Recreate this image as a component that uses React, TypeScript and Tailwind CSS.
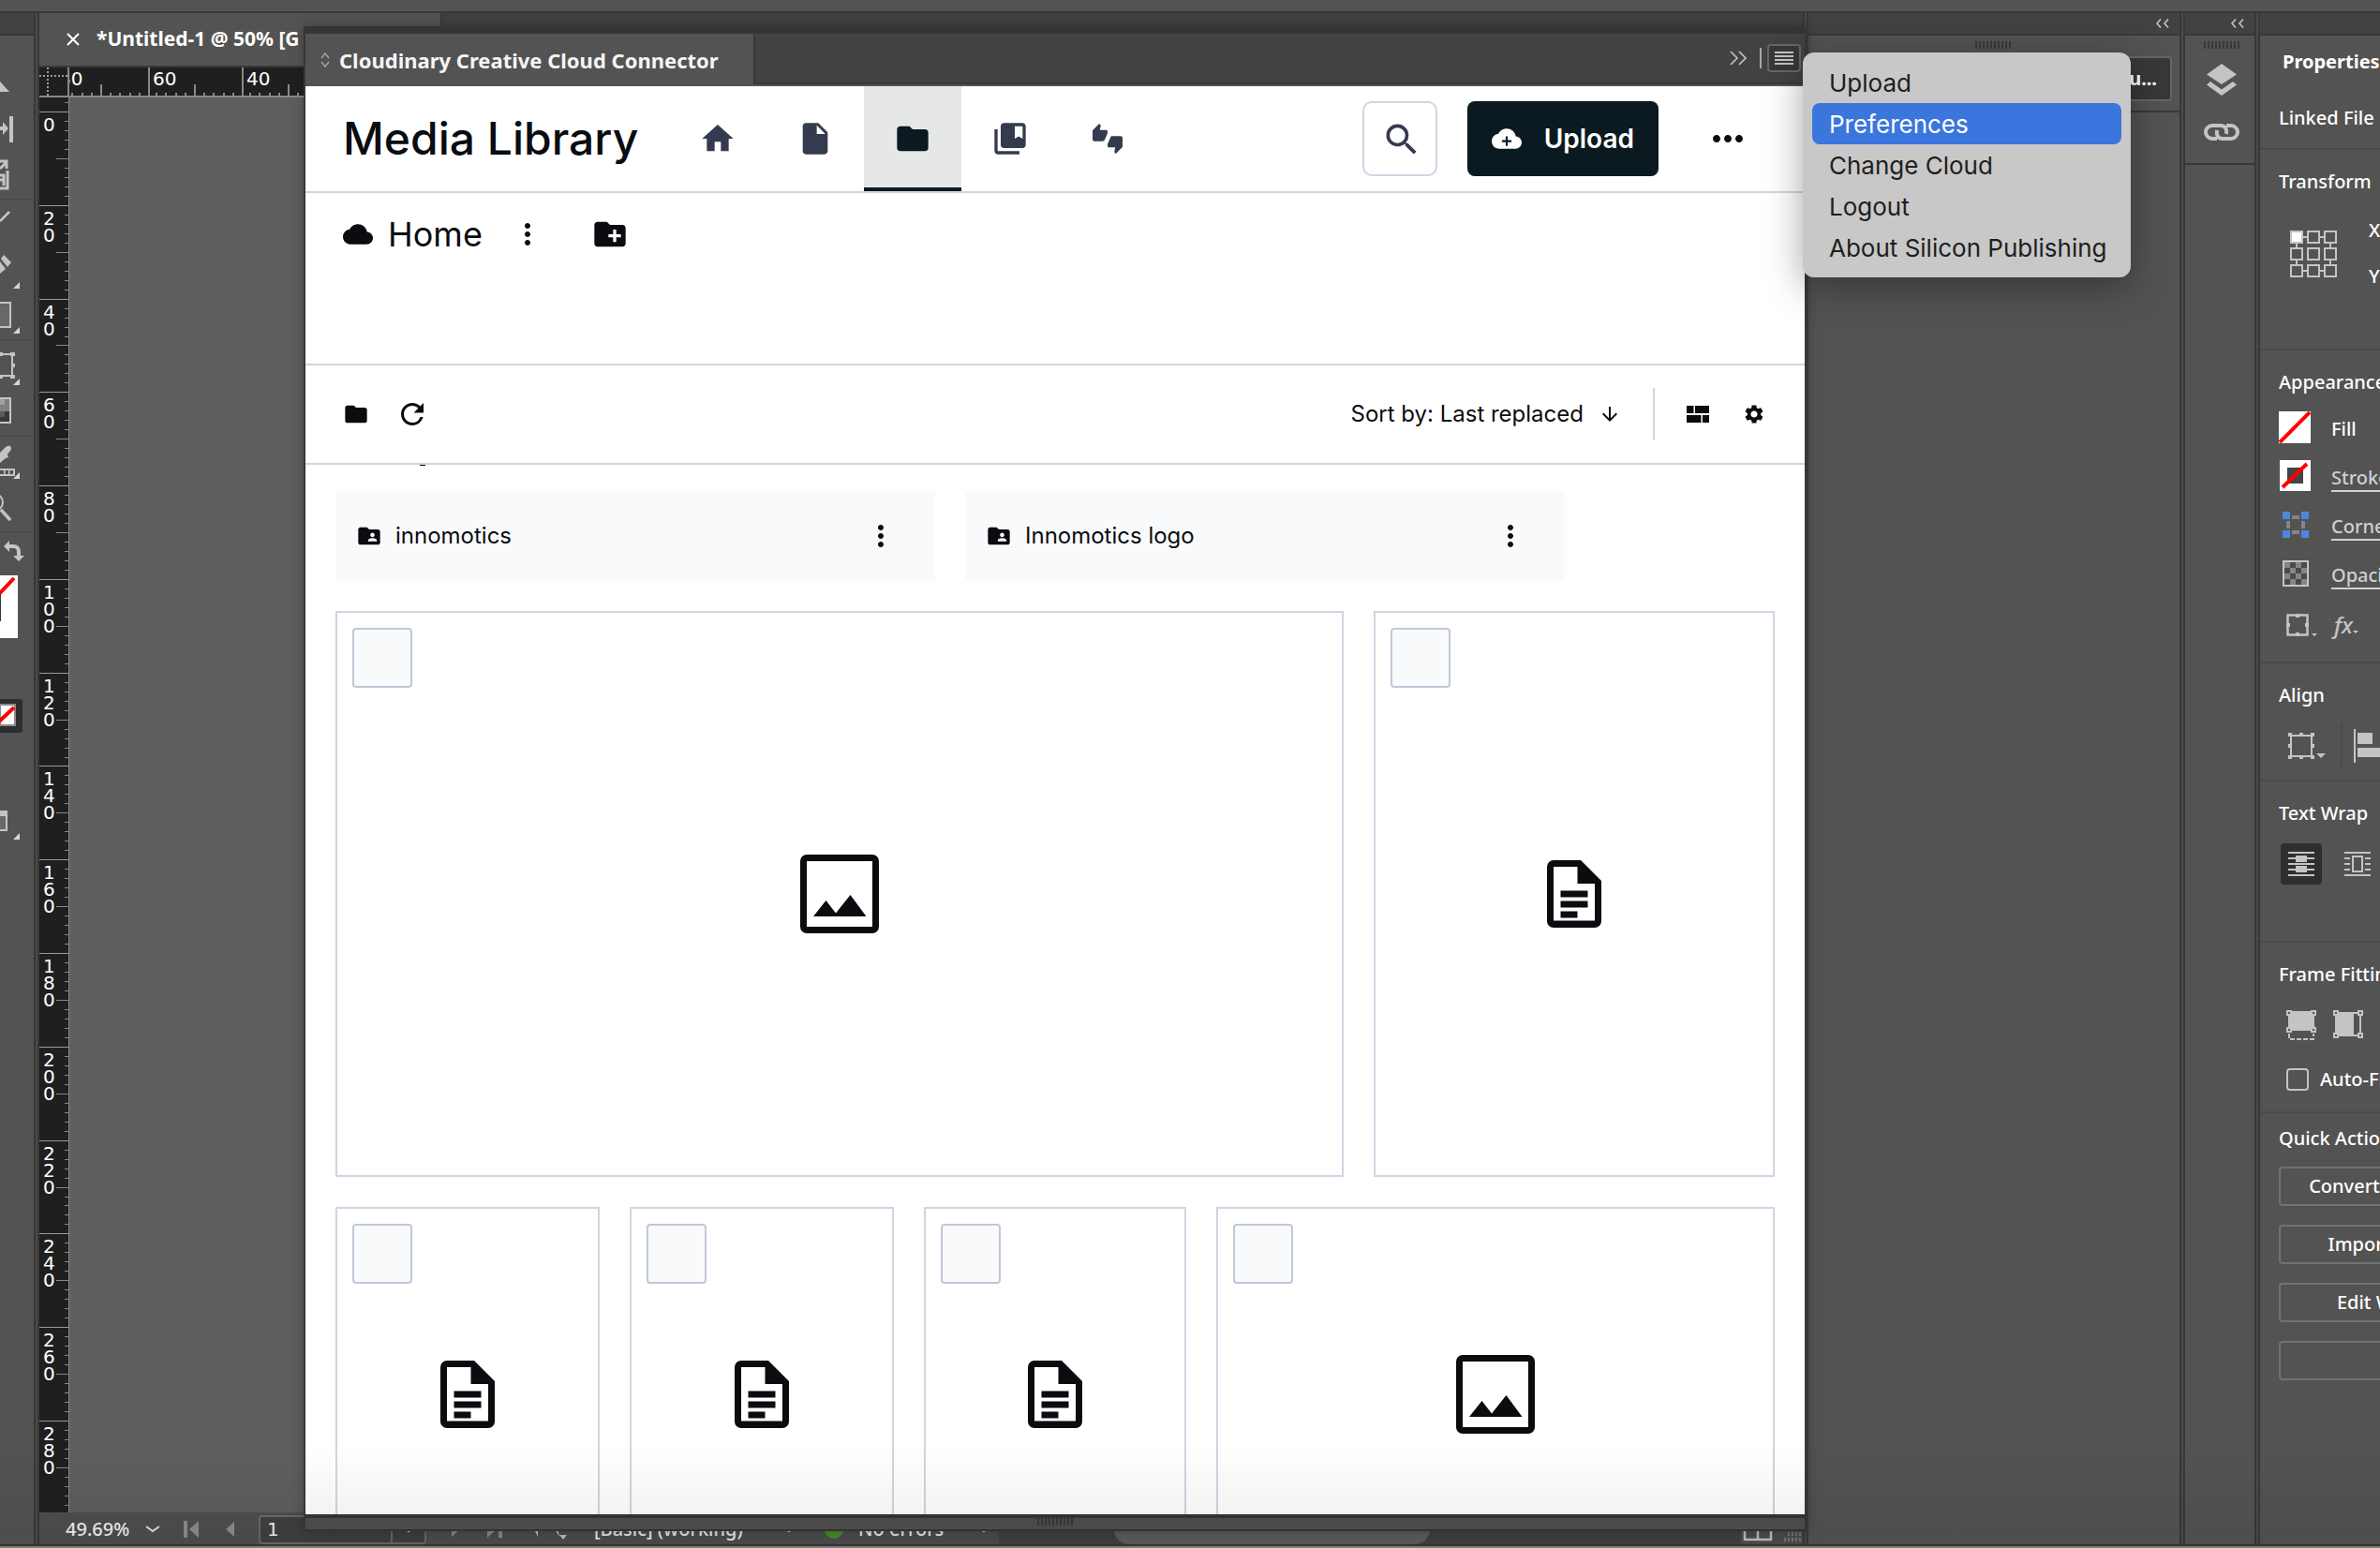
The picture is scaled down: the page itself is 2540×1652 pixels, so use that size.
import React from 'react'
import {
    MdArrowDownward,
    MdCloud,
    MdCollectionsBookmark,
    MdCreateNewFolder,
    MdFolder,
    MdFolderShared,
    MdHome,
    MdInsertDriveFile,
    MdMoreHoriz,
    MdMoreVert,
    MdRefresh,
    MdSearch,
    MdSettings,
    MdThumbsUpDown,
} from 'react-icons/md'


/* ---------- small shared pieces ---------- */

const Divider = () => (
    <div className="w-[6px] shrink-0 border-x-2 border-[#383838] bg-[#4a4a4a]" />
)

const Chevrons = () => (
    <svg width="14" height="10" viewBox="0 0 14 10" fill="none" stroke="#c4c4c4" strokeWidth="1.6">
        <path d="M5 0.500L1 5l4 4.500M13 0.500L9 5l4 4.500" />
    </svg>
)

const Grip = () => (
    <svg width="38" height="8" viewBox="0 0 38 8" stroke="#383838" strokeWidth="2">
        <path d="M1 0v8M5 0v8M9 0v8M13 0v8M17 0v8M21 0v8M25 0v8M29 0v8M33 0v8M37 0v8" />
    </svg>
)

const Down = ({ className = '' }) => (
    <svg width="16" height="8" viewBox="0 0 16 8" fill="none" stroke="#e0e0e0" strokeWidth="2" className={className}>
        <path d="M1 1l7 5 7-5" />
    </svg>
)


/* ---------- left tool strip ---------- */

const corner = (y: number) => <path d={`M21 ${y}v7h-7z`} fill="#d6d6d6" />

const tools = [
    { name: 'Direct selection', y: 78, h: 36, art: <path d="M0 87l10 11H0z" fill="#c4c4c4" /> },
    { name: 'Gap', y: 114, h: 48, art: <path d="M0 135h3v-5l6 7-6 7v-5H0zM10 124h4v28h-4z" fill="#c4c4c4" /> },
    {
        name: 'Content collector', y: 162, h: 50, art: (
            <g fill="none" stroke="#c4c4c4" strokeWidth="2">
                <path d="M0 180l6-6M0 172h7v8M8 182v19H0M0 187h4v11M0 192h4" strokeWidth="3" />
            </g>
        ),
    },
    { name: 'Line', y: 214, h: 44, line: true, art: <path d="M0 236l10-10" stroke="#c4c4c4" strokeWidth="2.500" /> },
    {
        name: 'Pencil', y: 258, h: 54, art: (
            <g fill="#c4c4c4"><path d="M4 272l8 8-4 5-7-9zM0 279l6 8-6 5z" />{corner(301)}</g>
        ),
    },
    {
        name: 'Rectangle', y: 312, h: 50, art: (
            <g><path d="M-2 323H11v26H-2" fill="#686868" stroke="#c4c4c4" strokeWidth="2" />{corner(349)}</g>
        ),
    },
    {
        name: 'Free transform', y: 364, h: 50, line: true, art: (
            <g>
                <path d="M0 378h13v23H0" fill="none" stroke="#c4c4c4" strokeWidth="2" />
                <path d="M0 376h3v4H0zM11 376h5v4h-5zM11 400h5v4h-5zM0 400h3v4H0zM12 388h4v4h-4z" fill="#c4c4c4" />
                {corner(404)}
            </g>
        ),
    },
    {
        name: 'Gradient', y: 414, h: 50, art: (
            <g>
                <path d="M0 425h11v7H0z" fill="#a0a0a0" />
                <path d="M5 432h6v-7H5zM0 432h11v7H0z" fill="#808080" />
                <path d="M0 439h5v6H0z" fill="#5a5a5a" />
                <path d="M5 439h6v6H5zM0 445h11v6H0z" fill="#383838" />
                <path d="M-2 425H11v26H-2" fill="none" stroke="#c4c4c4" strokeWidth="2" />
            </g>
        ),
    },
    {
        name: 'Eyedropper', y: 466, h: 50, line: true, art: (
            <g fill="#c4c4c4">
                <path d="M0 483l6-6c4-3 8 0 5 4l-3 4 1 3-3 1-6 5z" />
                <path d="M0 501h15v6H0" fill="none" stroke="#c4c4c4" strokeWidth="2" />
                <path d="M4 501h1.500v6H4zM9 501h1.500v6H9z" />
                {corner(504)}
            </g>
        ),
    },
    {
        name: 'Zoom', y: 516, h: 51, art: (
            <g fill="none" stroke="#c4c4c4">
                <circle cx="-6" cy="536" r="9" strokeWidth="2" />
                <path d="M1 544l10 11" strokeWidth="3.500" />
            </g>
        ),
    },
    {
        name: 'Swap fill and stroke', y: 569, h: 38, line: true, art: (
            <g fill="#c4c4c4">
                <path d="M4 583l6-6v4h4c5 0 8 3 8 8v4h4l-6 6-6-6h4v-4c0-3-1-4-4-4h-4v4z" />
            </g>
        ),
    },
    {
        name: 'Fill', y: 607, h: 130, art: (
            <g>
                <path d="M0 614h19v67H0z" fill="#fff" />
                <path d="M-2 635l17-18" stroke="#f00" strokeWidth="4" />
                <path d="M0 634h1v29H0z" fill="#383838" />
            </g>
        ),
    },
    {
        name: 'Apply none', y: 737, h: 110, art: (
            <g>
                <path d="M0 746h21a3 3 0 0 1 3 3v30a3 3 0 0 1-3 3H0z" fill="#2e2e2e" />
                <path d="M0 752h16v22H0z" fill="#fff" stroke="#8a8a8a" strokeWidth="2" />
                <path d="M-1 770l16-15" stroke="#f00" strokeWidth="4" />
            </g>
        ),
    },
    {
        name: 'Screen mode', y: 847, h: 60, art: (
            <g>
                <path d="M0 866h7v20H0" fill="#686868" stroke="#c4c4c4" strokeWidth="2" />
                <path d="M0 865h8v6H0z" fill="#c4c4c4" />
                {corner(889)}
            </g>
        ),
    },
]

const ToolStrip = () => (
    <aside className="w-9 shrink-0 flex flex-col">
        <div className="h-6 mb-10 bg-[#424242] border-b-2 border-[#383838]" />
        {tools.map((t) => (
            <button key={t.name} aria-label={t.name} className={t.line ? 'block border-t-2 border-[#4b4b4b]' : 'block'}>
                <svg width="36" height={t.h} viewBox={`0 ${t.y} 36 ${t.h}`} className="block">{t.art}</svg>
            </button>
        ))}
    </aside>
)


/* ---------- rulers ---------- */

const ticks = [0, 1, 2, 3, 4, 5, 6, 7, 8, 9]

const HSegment = ({ label = '' }) => (
    <div className="w-[100px] shrink-0 h-full border-l-2 border-[#888] flex flex-col">
        <div className="h-[18px] pl-[3px] leading-6">{label}</div>
        <div className="h-3 -ml-0.5 flex items-end">
            {ticks.map((n) => (
                <div key={n} className={`flex-1 border-[#888] ${n === 0 ? '' : 'border-l-2'} ${n === 5 ? 'h-3' : 'h-[3px]'}`} />
            ))}
        </div>
    </div>
)

const VSegment = ({ label = '' }) => (
    <div className="min-h-0 flex-1 border-t border-[#999] flex">
        <div className="w-[17px] shrink-0 pt-1 pl-1 flex flex-col leading-[18px]">
            {label.split('').map((d, i) => <span key={i}>{d}</span>)}
        </div>
        <div className="flex-1 flex flex-col items-end">
            {ticks.map((n) => (
                <div key={n} className={`flex-1 border-[#888] ${n === 0 ? '' : 'border-t'} ${n === 5 ? 'w-[13px]' : 'w-1'}`} />
            ))}
        </div>
    </div>
)

const vLabels = ['0', '20', '40', '60', '80', '100', '120', '140', '160', '180', '200', '220', '240', '260']

const DocumentArea = () => (
    <section className="min-w-0 flex-1 flex flex-col">
        <div className="h-[58px] shrink-0 flex bg-[#404040] border-b-2 border-[#383838]">
            <div className="w-[430px] pl-[29px] flex items-center gap-[18px] bg-[#535353] border-r-2 border-[#383838] text-white text-[21px] font-bold">
                <button aria-label="Close document">
                    <svg width="14" height="14" viewBox="0 0 14 14" stroke="#fff" strokeWidth="2"><path d="M1 1l12 12M13 1L1 13" /></svg>
                </button>
                <span className="whitespace-nowrap">*Untitled-1 @ 50% [G</span>
            </div>
        </div>

        <div className="h-8 shrink-0 flex bg-[#1f1f1f] border-b-2 border-[#888] text-white font-['DejaVu_Sans',sans-serif] text-[20px]">
            <svg width="30" height="30" viewBox="0 0 30 30" stroke="#999" strokeWidth="2" strokeDasharray="2 2" className="shrink-0">
                <path d="M0 9h30M9 0v30" />
            </svg>
            <div className="w-[86px] shrink-0 overflow-hidden flex justify-end border-l-2 border-[#888]">
                <HSegment label="80" />
            </div>
            <HSegment label="60" />
            <HSegment label="40" />
        </div>

        <div className="flex-1 min-h-0 flex">
            <div className="w-8 shrink-0 flex flex-col bg-[#1f1f1f] border-r border-[#888] text-white font-['DejaVu_Sans',sans-serif] text-[20px]">
                <div className="h-[15px] shrink-0 overflow-hidden flex flex-col justify-end">
                    <div className="h-[100px] shrink-0 flex flex-col"><VSegment /></div>
                </div>
                {vLabels.map((l) => <VSegment key={l} label={l} />)}
                <div className="h-[98px] shrink-0 overflow-hidden">
                    <div className="h-[100px] flex flex-col"><VSegment label="280" /></div>
                </div>
            </div>
            <div className="flex-1 bg-[#5e5e5e]" />
        </div>

        <StatusBar />
    </section>
)

const StatusBar = () => (
    <div className="h-[34px] shrink-0 pt-0.5 flex items-center bg-[#4e4e4e] text-[#f0f0f0] text-[20px] font-medium">
        <span className="w-[113px] pl-7">49.69%</span>
        <Down />
        <svg width="54" height="18" viewBox="0 0 54 18" fill="#8c8c8c" className="ml-[25px]">
            <path d="M0 0h4v18H0zM16 0v18L6 9zM54 1v16l-9-8z" />
        </svg>
        <div className="ml-[26px] h-[31px] w-[179px] flex items-center rounded-sm border-2 border-[#6a6a6a] bg-[#404040]">
            <input aria-label="Page" defaultValue="1" className="w-[141px] h-full pl-[7px] border-r-2 border-[#6a6a6a] font-['DejaVu_Sans',sans-serif]" />
            <Down className="mx-auto" />
        </div>
        <svg width="54" height="18" viewBox="0 0 54 18" fill="#8c8c8c" className="ml-[27px]">
            <path d="M0 1v16l9-8zM38 0v18l10-9zM50 0h4v18h-4z" />
        </svg>
        <svg width="36" height="24" viewBox="0 0 36 24" fill="#c4c4c4" className="ml-[33px]">
            <path d="M0 10l5 10V10zM22 10l6 10-2-10zM28 18h8l-4 5z" />
        </svg>
        <span className="ml-[29px] w-[200px]">[Basic] (working)</span>
        <Down />
        <span className="ml-[30px] w-5 h-5 rounded-full bg-[#45922d]" />
        <span className="ml-3 w-[130px] pl-1">No errors</span>
        <Down />
        <div className="ml-2 flex-1 h-full bg-[#424242]">
            <div className="ml-[123px] w-[337px] h-full rounded-full bg-[#5e5e5e]" />
        </div>
        <svg width="66" height="30" viewBox="0 0 66 30" fill="none" stroke="#c4c4c4" strokeWidth="2.500">
            <path d="M4 8h28v18H4zM18 8v18" />
            <path d="M54 14h10M50 20h14M46 26h18" stroke="#777" strokeWidth="4" strokeDasharray="2 2" />
        </svg>
    </div>
)


/* ---------- media library window ---------- */

const ImageArt = () => (
    <svg width="84" height="84" viewBox="0 0 84 84">
        <rect x="3.500" y="3.500" width="77" height="77" rx="3.500" fill="none" stroke="#0b0c10" strokeWidth="7" />
        <path d="M14 66l13.500-17L38 62.500 53.500 43 70.500 66z" fill="#0b0c10" />
    </svg>
)

const DocArt = () => (
    <svg width="58" height="72" viewBox="0 0 58 72" fill="#0b0c10">
        <path fillRule="evenodd" d="M7 0h29l22 22v43a7 7 0 0 1-7 7H7a7 7 0 0 1-7-7V7a7 7 0 0 1 7-7zM7 7v57.500h44V25H32.500V7z" />
        <path d="M14.500 32.500h29v7h-29zM14.500 43.500h29v7h-29zM14.500 54.500h18v7h-18z" />
    </svg>
)

const Card = ({ kind, className }: { kind: string; className: string }) => (
    <div className={`relative border-2 border-[#d0d5e2] flex items-center justify-center ${className}`}>
        <input
            type="checkbox"
            aria-label={`Select ${kind}`}
            className="absolute left-4 top-4 w-16 h-16 appearance-none rounded-sm border-2 border-[#c0c8d8] bg-[#f9fafc]"
        />
        {kind === 'image' ? <ImageArt /> : <DocArt />}
    </div>
)

const FolderCard = ({ name }: { name: string }) => (
    <div className="w-[640px] h-24 pl-[22px] pr-10 flex items-center bg-[#f9fafc]">
        <MdFolderShared size={28} />
        <span className="pl-[14px] flex-1">{name}</span>
        <button aria-label={`${name} options`}><MdMoreVert size={36} /></button>
    </div>
)

const navItems = [
    { name: 'Home', icon: <MdHome size={40} /> },
    { name: 'Assets', icon: <MdInsertDriveFile size={40} /> },
    { name: 'Folders', icon: <MdFolder size={40} />, active: true },
    { name: 'Collections', icon: <MdCollectionsBookmark size={40} /> },
    { name: 'Moderation', icon: <MdThumbsUpDown size={32} /> },
]

const MediaLibrary = () => (
    <main className="flex-1 min-h-0 flex flex-col overflow-hidden bg-white text-[#0b0c10] font-['Inter',sans-serif] text-[24px]">
        <header className="h-[114px] shrink-0 pl-10 pr-[58px] flex items-center border-b-2 border-[#d0d5e2]">
            <h1 className="w-[348px] text-[48px] font-medium whitespace-nowrap">Media Library</h1>
            <nav className="h-full flex text-[#353b4e]">
                {navItems.map((n) => (
                    <a
                        key={n.name}
                        href="#"
                        aria-label={n.name}
                        className={`w-[104px] flex items-center justify-center ${n.active ? 'pt-1 bg-[#e6e8e7] border-b-4 border-[#0a1a20] text-[#0a1a20]' : ''}`}
                    >
                        {n.icon}
                    </a>
                ))}
            </nav>
            <button aria-label="Search" className="ml-auto w-20 h-20 pl-1 pt-0.5 flex items-center justify-center rounded-[10px] border-2 border-[#d0d5e2] text-[#353b4e]">
                <MdSearch size={44} />
            </button>
            <button className="ml-8 h-20 px-[26px] flex items-center gap-6 rounded-lg bg-[#0a1a20] text-white text-[28px] font-semibold">
                <svg width="32" height="32" viewBox="0 0 24 24" fill="currentColor">
                    <path fillRule="evenodd" d="M19.350 10.040A7.490 7.490 0 0 0 12 4C9.110 4 6.600 5.640 5.350 8.040A5.994 5.994 0 0 0 0 14c0 3.310 2.690 6 6 6h13c2.760 0 5-2.240 5-5 0-2.640-2.050-4.780-4.650-4.960zM11.200 10.200h1.600v3h3v1.600h-3v3h-1.600v-3h-3v-1.600h3z" />
                </svg>
                Upload
            </button>
            <button aria-label="More" className="ml-[50px]"><MdMoreHoriz size={48} /></button>
        </header>

        <div className="h-[184px] shrink-0 pl-10 pt-5 flex items-start border-b-2 border-[#d0d5e2]">
            <div className="h-12 flex items-center">
                <MdCloud size={32} />
                <a href="#" className="pl-4 pr-[30px] text-[36px]">Home</a>
                <button aria-label="Folder options"><MdMoreVert size={36} /></button>
                <button aria-label="New folder" className="ml-[50px]"><MdCreateNewFolder size={40} /></button>
            </div>
        </div>

        <div className="h-[106px] shrink-0 pl-10 pr-[42px] flex items-center border-b-2 border-[#d0d5e2]">
            <button aria-label="Show folders"><MdFolder size={28} /></button>
            <button aria-label="Refresh" className="ml-7"><MdRefresh size={36} /></button>
            <button className="ml-auto flex items-center gap-4">
                Sort by: Last replaced
                <MdArrowDownward size={24} />
            </button>
            <div className="ml-[34px] mr-[34px] w-0.5 h-14 bg-[#d0d5e2]" />
            <button aria-label="Layout">
                <svg width="24" height="18" viewBox="0 0 24 18" fill="currentColor">
                    <path d="M0 0h7.500v8H0zM9 0h15v8H9zM0 10h15.500v8H0zM17 10h7v8h-7z" />
                </svg>
            </button>
            <button aria-label="Settings" className="ml-9"><MdSettings size={24} /></button>
        </div>

        <div className="flex-1 min-h-0 overflow-hidden px-8">
            <div className="h-7 pl-[90px]"><div className="w-1.5 h-px bg-[#0b0c10]" /></div>
            <div className="flex gap-8">
                <FolderCard name="innomotics" />
                <FolderCard name="Innomotics logo" />
            </div>
            <div className="mt-8 h-[604px] flex gap-8">
                <Card kind="image" className="flex-[1072]" />
                <Card kind="document" className="flex-[424]" />
            </div>
            <div className="mt-8 h-[400px] flex gap-8">
                <Card kind="document" className="flex-[278]" />
                <Card kind="document" className="flex-[278]" />
                <Card kind="document" className="flex-[276]" />
                <Card kind="image" className="flex-[592]" />
            </div>
        </div>
    </main>
)

const ConnectorWindow = () => (
    <section className="absolute left-[324px] right-[610px] top-7 bottom-[18px] flex flex-col border-l-2 border-r-4 border-[#383838] bg-[#4e4e4e] shadow-[0_0_12px_rgba(0,0,0,0.250)]">
        <div className="h-2 shrink-0 bg-[#353535]" />
        <div className="h-14 shrink-0 flex border-b-2 border-[#535353] bg-[#424242]">
            <div className="h-full w-[480px] pl-4 pt-0.5 flex items-center gap-[10px] bg-[#535353] border-r-2 border-[#383838]">
                <svg width="10" height="16" viewBox="0 0 10 16" fill="none" stroke="#a0a0a0" strokeWidth="1.500">
                    <path d="M1 6l4-5 4 5M1 10l4 5 4-5" />
                </svg>
                <h2 className="text-[#f5f5f5] text-[22px] font-bold whitespace-nowrap">Cloudinary Creative Cloud Connector</h2>
            </div>
            <div className="flex-1 pr-1 flex items-center justify-end border-b-2 border-[#383838]">
                <button aria-label="Collapse">
                    <svg width="18" height="16" viewBox="0 0 18 16" fill="none" stroke="#c4c4c4" strokeWidth="1.600">
                        <path d="M1 1l7 7-7 7M10 1l7 7-7 7" />
                    </svg>
                </button>
                <div className="ml-[14px] w-0.5 h-[22px] bg-[#a8a8a8]" />
                <button aria-label="Panel menu" className="ml-1.5 w-9 h-[30px] flex items-center justify-center rounded border-2 border-[#666] bg-[#383838]">
                    <svg width="20" height="14" viewBox="0 0 20 14" stroke="#c4c4c4" strokeWidth="2">
                        <path d="M0 1h20M0 5h20M0 9h20M0 13h20" />
                    </svg>
                </button>
            </div>
        </div>
        <MediaLibrary />
        <div className="h-[18px] shrink-0 flex justify-center border-t-4 border-b-2 border-[#353535]"><Grip /></div>
    </section>
)

const menuItems = ['Upload', 'Preferences', 'Change Cloud', 'Logout', 'About Silicon Publishing']

const PanelMenu = () => (
    <ul className="absolute right-[266px] top-14 w-[350px] p-[10px] rounded-xl bg-[#c8c8c8] text-[#1e1e1e] font-['Inter',sans-serif] text-[26px] shadow-[0_10px_40px_rgba(0,0,0,0.350)]">
        {menuItems.map((m) => (
            <li key={m}>
                <button className={`w-full h-11 pl-[18px] flex items-center rounded-lg whitespace-nowrap ${m === 'Preferences' ? 'bg-[#3b76de] text-white' : ''}`}>
                    {m}
                </button>
            </li>
        ))}
    </ul>
)


/* ---------- right docks ---------- */

const DockHeader = ({ children }: { children?: React.ReactNode }) => (
    <div className="h-6 shrink-0 pr-[11px] flex items-center justify-end bg-[#424242] border-b-2 border-[#383838]">{children}</div>
)

const MiddleDock = () => (
    <section className="w-[396px] shrink-0 flex flex-col">
        <DockHeader><Chevrons /></DockHeader>
        <div className="h-[82px] pt-1.5 pl-1.5 pr-2 flex flex-col items-center border-b-2 border-[#383838]">
            <Grip />
            <button className="mt-2 w-full h-12 pr-3.5 flex items-center justify-end rounded border-2 border-[#666] bg-[#383838] text-white text-[20px] font-bold">
                Menu...
            </button>
        </div>
    </section>
)

const IconDock = () => (
    <section className="w-[74px] shrink-0 flex flex-col">
        <DockHeader><Chevrons /></DockHeader>
        <div className="h-[138px] pt-1.5 pl-1 flex flex-col items-center border-b-2 border-[#383838]">
            <Grip />
            <button aria-label="Layers" className="mt-4">
                <svg width="32" height="34" viewBox="0 0 32 34" fill="#c4c4c4" className="block">
                    <path d="M16 0l16 11.500L16 22 0 11.500zM4 19l12 8.500L28 19l4 3.500L16 34 0 22.500z" />
                </svg>
            </button>
            <button aria-label="Links" className="mt-[30px]">
                <svg width="38" height="18" viewBox="0 0 38 18" fill="none" stroke="#c4c4c4" strokeWidth="4" className="block">
                    <path d="M14 16H9A7 7 0 0 1 9 2h9c5 0 7 4 6 9M24 2h5a7 7 0 0 1 0 14h-9c-5 0-7-4-6-9" />
                </svg>
            </button>
        </div>
    </section>
)

const Section = ({ title, className, children }: { title: string; className: string; children: React.ReactNode }) => (
    <div className={`pl-5 pt-5 border-t-2 border-[#4a4a4a] ${className}`}>
        <h3 className="leading-7">{title}</h3>
        {children}
    </div>
)

const cells = [0, 1, 2]

const TransformRef = () => (
    <svg width="50" height="50" viewBox="0 0 50 50" fill="none" stroke="#c4c4c4" strokeWidth="2" className="shrink-0">
        <path d="M14 7h4M32 7h4M7 14v4M43 14v4M7 32v4M43 32v4M14 43h4M32 43h4" />
        {cells.map((r) => cells.map((c) => (
            <rect key={`${r}${c}`} x={1 + c * 18} y={1 + r * 18} width="12" height="12" fill={r + c === 0 ? '#fff' : 'none'} />
        )))}
    </svg>
)

const FrameIcon = () => (
    <svg width="42" height="28" viewBox="0 0 42 28" fill="#c4c4c4">
        <path d="M3 3h22v22H3z" fill="none" stroke="#c4c4c4" strokeWidth="2" />
        <path d="M0 0h4v4H0zM12 0h4v4h-4zM24 0h4v4h-4zM0 12h4v4H0zM24 12h4v4h-4zM0 24h4v4H0zM12 24h4v4h-4zM24 24h4v4h-4z" />
        <path d="M30 22h10l-5 5z" />
    </svg>
)

const rows = [
    {
        name: 'Fill', plain: true, art: (
            <svg width="34" height="34" viewBox="0 0 34 34"><path d="M0 0h34v34H0z" fill="#fff" /><path d="M1 33L33 1" stroke="#f00" strokeWidth="4" /></svg>
        ),
    },
    {
        name: 'Stroke', art: (
            <svg width="34" height="34" viewBox="0 0 34 34">
                <path d="M1 0h33v33H1z" fill="#fff" /><path d="M9 8h17v17H9z" fill="#444" /><path d="M4 29L30 4" stroke="#f00" strokeWidth="4" />
            </svg>
        ),
    },
    {
        name: 'Corner', art: (
            <svg width="34" height="28" viewBox="-4 0 34 28">
                <path d="M0 0h8v8H0zM20 0h8v8h-8zM0 20h8v8H0zM20 20h8v8h-8z" fill="#4a88e0" />
                <path d="M10 4h8v4h-8zM10 20h8v4h-8zM4 10h4v8H4zM20 10h4v8h-4z" fill="#858585" />
            </svg>
        ),
    },
    {
        name: 'Opacity', art: (
            <svg width="34" height="28" viewBox="-4 0 34 28">
                <path d="M1 1h26v26H1z" fill="#4a4a4a" stroke="#c4c4c4" strokeWidth="2" />
                <path d="M2 2h6v6H2zM14 2h6v6h-6zM8 8h6v6H8zM20 8h6v6h-6zM2 14h6v6H2zM14 14h6v6h-6zM8 20h6v6H8zM20 20h6v6h-6z" fill="#858585" />
            </svg>
        ),
    },
]

const quickActions = ['Convert to Link', 'Import File', 'Edit With', '']

const Properties = () => (
    <section className="w-32 shrink-0 flex flex-col overflow-hidden whitespace-nowrap text-white text-[20px] font-medium">
        <DockHeader />
        <h2 className="h-14 shrink-0 pl-6 flex items-center font-bold">Properties</h2>
        <p className="h-16 shrink-0 pl-5 flex items-center">Linked File</p>

        <Section title="Transform" className="h-[214px] shrink-0">
            <div className="mt-6 pl-3 flex items-center gap-[34px]">
                <TransformRef />
                <div className="flex flex-col gap-[21px] leading-7"><span>X:</span><span>Y:</span></div>
            </div>
        </Section>

        <Section title="Appearance" className="pb-2.5">
            <div className="pt-2">
                {rows.map((r) => (
                    <div key={r.name} className="h-[52px] flex items-center gap-[22px]">
                        <span className="shrink-0">{r.art}</span>
                        <span className="pt-1">
                            {r.plain ? r.name : <a href="#" className="text-[#d0d0d0] underline underline-offset-[6px] decoration-2">{r.name}</a>}
                        </span>
                    </div>
                ))}
            </div>
            <div className="h-[58px] pl-2 flex items-center gap-[18px] text-[#c4c4c4]">
                <svg width="33" height="24" viewBox="0 0 33 24" fill="#c4c4c4" className="shrink-0">
                    <path d="M1.500 1.500h21v21h-21z" fill="none" stroke="#c4c4c4" strokeWidth="2.500" />
                    <path d="M10 0h4v4h-4zM10 20h4v4h-4zM0 10h4v4H0zM20 10h4v4h-4zM27 21h6l-3 3z" />
                </svg>
                <button className="flex items-end text-[24px] italic">
                    fx
                    <svg width="6" height="12" viewBox="0 0 6 12" fill="#c4c4c4"><path d="M0 0h6L3 3z" /></svg>
                </button>
            </div>
        </Section>

        <Section title="Align" className="pb-3">
            <div className="mt-4 h-12 pl-[10px] flex items-center">
                <span className="shrink-0"><FrameIcon /></span>
                <div className="ml-[14px] mr-3 w-0.5 h-full shrink-0 bg-[#4b4b4b]" />
                <svg width="40" height="36" viewBox="0 0 40 36" fill="#c4c4c4" className="shrink-0">
                    <path d="M0 0h2v36H0zM4 4h16v12H4zM4 20h36v10H4z" />
                </svg>
            </div>
        </Section>

        <Section title="Text Wrap" className="h-[172px] shrink-0">
            <div className="mt-[18px] flex items-center gap-6">
                <button aria-label="No text wrap" className="ml-0.5 w-11 h-11 shrink-0 flex items-center justify-center rounded bg-[#2e2e2e]">
                    <svg width="28" height="26" viewBox="0 0 28 26" fill="#c4c4c4">
                        <path d="M0 0h28v2H0zM0 6h28v2H0zM0 12h28v2H0zM0 18h28v2H0zM0 24h28v2H0zM8 4h12v2H8zM8 8h12v3H8zM8 15h12v3H8zM8 20h12v2H8z" />
                    </svg>
                </button>
                <button aria-label="Wrap around bounding box" className="shrink-0">
                    <svg width="28" height="26" viewBox="0 0 28 26" fill="#c4c4c4">
                        <path d="M0 0h28v2H0zM0 6h6v2H0zM22 6h6v2h-6zM0 12h6v2H0zM22 12h6v2h-6zM0 18h6v2H0zM22 18h6v2h-6zM0 24h28v2H0z" />
                        <path d="M9 5h10v16H9z" fill="none" stroke="#c4c4c4" strokeWidth="2" />
                    </svg>
                </button>
            </div>
        </Section>

        <Section title="Frame Fitting" className="pb-5">
            <div className="mt-6 pl-2 flex gap-[18px]">
                <button aria-label="Fill frame" className="shrink-0">
                    <svg width="32" height="32" viewBox="0 0 32 32" fill="none" stroke="#c4c4c4" strokeWidth="2">
                        <path d="M3 2h26v19H3z" fill="#c4c4c4" />
                        <path d="M1 1h4v4H1zM27 1h4v4h-4zM1 19h4v4H1zM27 19h4v4h-4z" fill="#535353" />
                        <path d="M3 25v6h26v-6" strokeDasharray="5 2" />
                    </svg>
                </button>
                <button aria-label="Fit content" className="shrink-0">
                    <svg width="32" height="32" viewBox="0 0 32 32" fill="none" stroke="#c4c4c4" strokeWidth="2">
                        <path d="M3 3h26v24H3z" />
                        <path d="M3 3h18v24H3z" fill="#c4c4c4" />
                        <path d="M1 1h4v4H1zM27 1h4v4h-4zM1 25h4v4H1zM27 25h4v4h-4z" fill="#535353" />
                    </svg>
                </button>
            </div>
            <label className="mt-7 h-7 pl-2 flex items-center gap-3">
                <input type="checkbox" className="w-6 h-6 shrink-0 appearance-none rounded border-2 border-[#c4c4c4]" />
                Auto-Fit
            </label>
        </Section>

        <div className="pl-5 pt-[13px] border-t-2 border-[#4a4a4a]">
            <h3 className="leading-7">Quick Actions</h3>
            <div className="mt-4 flex flex-col gap-5">
                {quickActions.map((a, i) => (
                    <button key={i} className="w-[210px] h-[42px] rounded border-2 border-[#727272]">{a}</button>
                ))}
            </div>
        </div>
    </section>
)


const App = () => {
    return (
        <div className="relative h-screen flex flex-col overflow-hidden bg-[#535353] font-['Noto_Sans',sans-serif]">
            <div className="h-[14px] shrink-0 border-b-2 border-[#383838]" />
            <div className="flex-1 min-h-0 flex">
                <ToolStrip />
                <Divider />
                <DocumentArea />
                <Divider />
                <MiddleDock />
                <Divider />
                <IconDock />
                <Divider />
                <Properties />
            </div>
            <div className="h-1 shrink-0 border-t-2 border-[#383838] bg-[#888]" />

            <ConnectorWindow />
            <PanelMenu />
            <div className="absolute inset-x-0 bottom-0 h-28 pointer-events-none bg-linear-to-t from-black/7 to-transparent" />
        </div>
    )
}

export default App
